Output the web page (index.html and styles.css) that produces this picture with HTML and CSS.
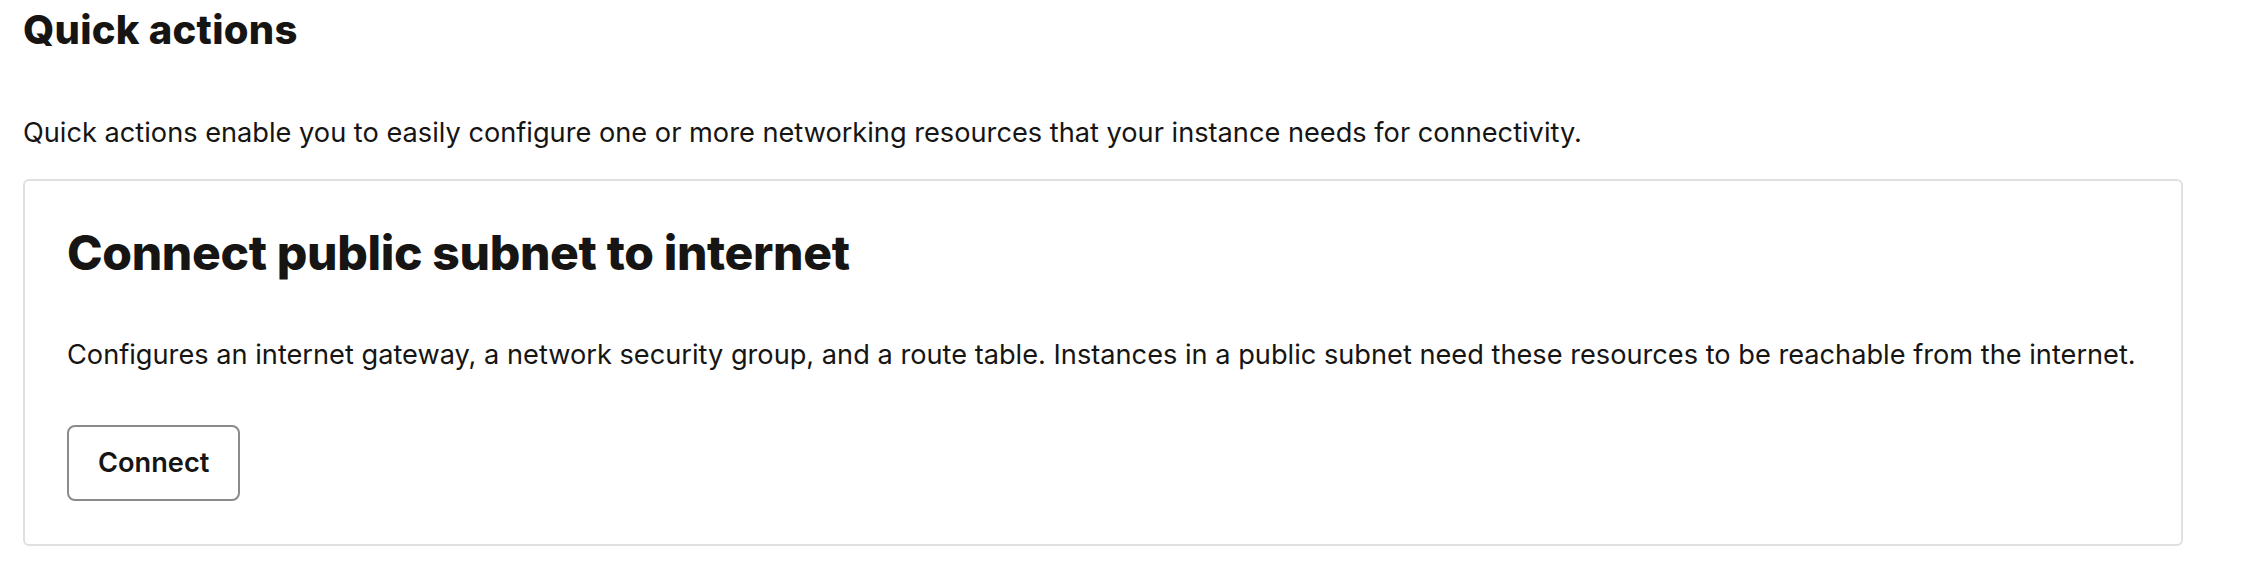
FILE: index.html
```html
<!DOCTYPE html>
<html lang="en">
<head>
<meta charset="utf-8">
<title>Quick actions</title>
<link rel="stylesheet" href="styles.css">
</head>
<body>
<main class="page">
  <h1 class="page-title">Quick actions</h1>
  <p class="page-intro">Quick actions enable you to easily configure one or more networking resources that your instance needs for connectivity.</p>
  <section class="card">
    <h2 class="card-title">Connect public subnet to internet</h2>
    <p class="card-desc">Configures an internet gateway, a network security group, and a route table. Instances in a public subnet need these resources to be reachable from the internet.</p>
    <div class="card-actions">
      <button class="btn" type="button">Connect</button>
    </div>
  </section>
</main>
</body>
</html>
```

FILE: styles.css
```css
html, body {
  margin: 0;
  padding: 0;
  background: #ffffff;
}

body {
  font-family: Inter, "Noto Sans", "Liberation Sans", sans-serif;
  color: #161513;
}

.page {
  padding: 6px 0 0 23px;
  display: flex;
  flex-direction: column;
  align-items: flex-start;
}

.page-title {
  margin: 0;
  font-size: 40px;
  line-height: 48px;
  font-weight: 800;
  letter-spacing: 0.25px;
}

.page-intro {
  margin: 59px 0 0;
  font-size: 27.2px;
  line-height: 40px;
  font-weight: 400;
}

.card {
  box-sizing: border-box;
  width: 2160px;
  margin-top: 26px;
  border: 2px solid #e0e0e0;
  border-radius: 6px;
  padding: 44px 42px 43px;
  display: flex;
  flex-direction: column;
  align-items: flex-start;
}

.card-title {
  margin: 0;
  font-size: 48px;
  line-height: 56px;
  font-weight: 800;
  letter-spacing: -0.35px;
}

.card-desc {
  margin: 54px 0 0;
  font-size: 27.2px;
  line-height: 40px;
  font-weight: 400;
}

.card-actions {
  margin-top: 50px;
  display: flex;
}

.btn {
  font-family: inherit;
  font-size: 27.2px;
  line-height: 40px;
  font-weight: 600;
  color: #161513;
  background: #ffffff;
  border: 2px solid #8b8b8b;
  border-radius: 8px;
  padding: 16px 29px;
  cursor: pointer;
}
```
